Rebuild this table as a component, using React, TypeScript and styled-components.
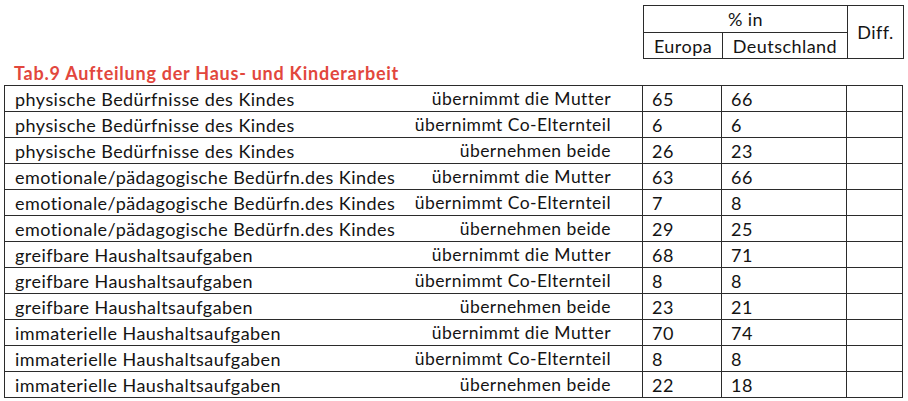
import styled, { createGlobalStyle } from 'styled-components';

type Row = {
    label: string;
    role: string;
    europa: number;
    deutschland: number;
};

const areas = [
    'physische Bedürfnisse des Kindes',
    'emotionale/pädagogische Bedürfn.des Kindes',
    'greifbare Haushaltsaufgaben',
    'immaterielle Haushaltsaufgaben',
];

const roles = ['übernimmt die Mutter', 'übernimmt Co-Elternteil', 'übernehmen beide'];

const values: [number, number][] = [
    [65, 66], [6, 6], [26, 23],
    [63, 66], [7, 8], [29, 25],
    [68, 71], [8, 8], [23, 21],
    [70, 74], [8, 8], [22, 18],
];

const rows: Row[] = values.map(([europa, deutschland], i) => ({
    label: areas[Math.floor(i / 3)],
    role: roles[i % 3],
    europa,
    deutschland,
}));

const App = () => {
    return (
        <>
            <GlobalStyle />
            <Page>
                <HeadTable>
                    <HeadCell span={2}>% in</HeadCell>
                    <DiffCell>Diff.</DiffCell>
                    <HeadCell>Europa</HeadCell>
                    <HeadCell>Deutschland</HeadCell>
                </HeadTable>

                <Title>Tab.9 Aufteilung der Haus- und Kinderarbeit</Title>

                <Table>
                    {rows.map((row, i) => (
                        <TableRow key={i}>
                            <LabelCell>
                                <span>{row.label}</span>
                                <Role>{row.role}</Role>
                            </LabelCell>
                            <NumCell>{row.europa}</NumCell>
                            <NumCell>{row.deutschland}</NumCell>
                            <NumCell />
                        </TableRow>
                    ))}
                </Table>
            </Page>
        </>
    );
};

export default App;

const GlobalStyle = createGlobalStyle`
    body {
        margin : 0;
        background : #ffffff;
        color : #141414;
        font-family : Lato, "Liberation Sans", sans-serif;
    }
`;

const Page = styled.div`
    width : 908px;
    padding : 5px 0 0 4px;
    box-sizing : border-box;
`;

const HeadTable = styled.div`
    margin-left : 639px;
    width : 259px;
    display : grid;
    grid-template-columns : 79px 125px 1fr;
    grid-template-rows : 27px 25px;
    border : 1px solid #2b2b2b;
    font-size : 18px;
    letter-spacing : 0.45px;
`;

const HeadCell = styled.div<{ span?: number }>`
    grid-column : span ${({ span }) => span || 1};
    display : flex;
    align-items : center;
    justify-content : center;
    border-right : 1px solid #2b2b2b;
    border-bottom : ${({ span }) => (span ? '1px solid #2b2b2b' : 'none')};
`;

const DiffCell = styled.div`
    grid-row : span 2;
    display : flex;
    align-items : center;
    justify-content : center;
`;

const Title = styled.h4`
    margin : 4px 0 2px 10px;
    height : 20px;
    line-height : 20px;
    font-size : 18px;
    font-weight : 700;
    letter-spacing : 0.75px;
    color : #e2473d;
`;

const Table = styled.div`
    width : 898px;
    border-top : 1px solid #2b2b2b;
    border-left : 1px solid #2b2b2b;
    font-size : 18px;
    letter-spacing : 0.45px;
`;

const TableRow = styled.div`
    display : grid;
    grid-template-columns : 638px 79px 125px 1fr;
    height : 26px;
    box-sizing : border-box;
    border-bottom : 1px solid #2b2b2b;
`;

const LabelCell = styled.div`
    display : flex;
    align-items : center;
    justify-content : space-between;
    padding : 0 31px 0 10px;
    border-right : 1px solid #2b2b2b;
    white-space : nowrap;
`;

const Role = styled.span`
    font-size : 17.5px;
`;

const NumCell = styled.div`
    display : flex;
    align-items : center;
    padding-left : 9px;
    border-right : 1px solid #2b2b2b;
`;
